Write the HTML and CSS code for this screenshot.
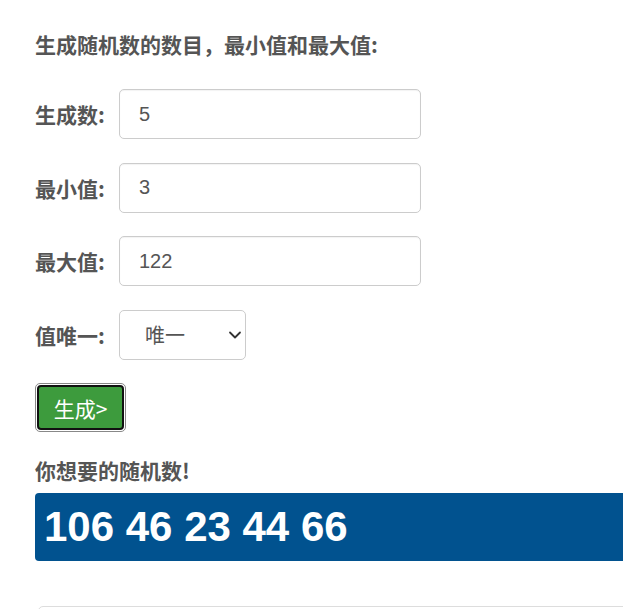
FILE: index.html
```html
<!DOCTYPE html>
<html lang="zh-CN">
<head>
    <meta charset="UTF-8">
    <meta name="viewport" content="width=device-width, initial-scale=1.0">
    <title>随机数生成器</title>
    <link rel="stylesheet" href="styles.css">
</head>
<body>
    <div class="page">
        <h4 class="title">生成随机数的数目，最小值和最大值:</h4>
        <form class="gen-form">
            <div class="form-row">
                <label for="count">生成数:</label>
                <input type="text" id="count" class="form-input" value="5">
            </div>
            <div class="form-row">
                <label for="min">最小值:</label>
                <input type="text" id="min" class="form-input" value="3">
            </div>
            <div class="form-row">
                <label for="max">最大值:</label>
                <input type="text" id="max" class="form-input" value="122">
            </div>
            <div class="form-row">
                <label for="unique">值唯一:</label>
                <div class="select-wrap">
                    <select id="unique" class="form-select">
                        <option>唯一</option>
                        <option>不唯一</option>
                    </select>
                    <svg class="select-arrow" width="14" height="10" viewBox="0 0 14 10">
                        <path d="M2 2.5 L7 7.5 L12 2.5" fill="none" stroke="#333" stroke-width="1.8" stroke-linecap="round" stroke-linejoin="round"/>
                    </svg>
                </div>
            </div>
            <div class="btn-ring">
                <button type="button" class="gen-btn">生成&gt;</button>
            </div>
        </form>
        <h4 class="result-title">你想要的随机数!</h4>
        <div class="result">106 46 23 44 66</div>
        <div class="history"></div>
    </div>
</body>
</html>
```

FILE: styles.css
```css
* {
    margin: 0;
    padding: 0;
    box-sizing: border-box;
}

html, body {
    overflow: hidden;
}

body {
    font-family: "Liberation Sans", Arial, "Noto Sans CJK SC", sans-serif;
    background: #fff;
    color: #555;
}

.page {
    padding: 31px 0 0 35px;
    width: 700px;
}

.title {
    font-family: "Noto Sans CJK SC", sans-serif;
    font-size: 21px;
    font-weight: bold;
    color: #555;
    line-height: 26px;
    margin-bottom: 32px;
}

.gen-form {
    display: flex;
    flex-direction: column;
    gap: 23.6px;
}

.form-row {
    display: flex;
    align-items: center;
    gap: 12px;
}

.form-row label {
    font-family: "Noto Sans CJK SC", sans-serif;
    font-size: 21px;
    font-weight: bold;
    color: #555;
    width: 72px;
    white-space: nowrap;
}

.form-input {
    width: 302px;
    height: 50px;
    padding: 0 19px;
    border: 1px solid #ccc;
    border-radius: 5px;
    font-family: "Liberation Sans", Arial, sans-serif;
    font-size: 20px;
    color: #555;
    box-shadow: inset 0 1px 1px rgba(0, 0, 0, 0.05);
}

.select-wrap {
    position: relative;
}

.form-select {
    appearance: none;
    width: 127px;
    height: 50px;
    padding: 0 25px;
    border: 1px solid #ccc;
    border-radius: 5px;
    background: #fff;
    font-family: "Noto Sans CJK SC", sans-serif;
    font-size: 20px;
    color: #555;
}

.select-arrow {
    position: absolute;
    right: 4px;
    top: 20px;
}

.btn-ring {
    align-self: flex-start;
    padding: 1px;
    border: 1px solid #888;
    border-radius: 5px;
}

.gen-btn {
    width: 87px;
    height: 45px;
    background: #3d9b3d;
    color: #fff;
    border: 2px solid #111;
    border-radius: 4px;
    font-family: "Noto Sans CJK SC", sans-serif;
    font-size: 21px;
    cursor: pointer;
}

.result-title {
    font-family: "Noto Sans CJK SC", sans-serif;
    font-size: 21px;
    font-weight: bold;
    color: #555;
    line-height: 26px;
    margin-top: 25px;
    margin-bottom: 10px;
}

.result {
    background: #01528f;
    color: #fff;
    font-family: "Liberation Sans", Arial, sans-serif;
    font-size: 42px;
    font-weight: bold;
    height: 68px;
    line-height: 68px;
    padding-left: 9px;
    border-radius: 4px;
}

.history {
    margin-top: 45px;
    margin-left: 3px;
    height: 40px;
    border: 1px solid #ddd;
    border-radius: 5px;
}
```
